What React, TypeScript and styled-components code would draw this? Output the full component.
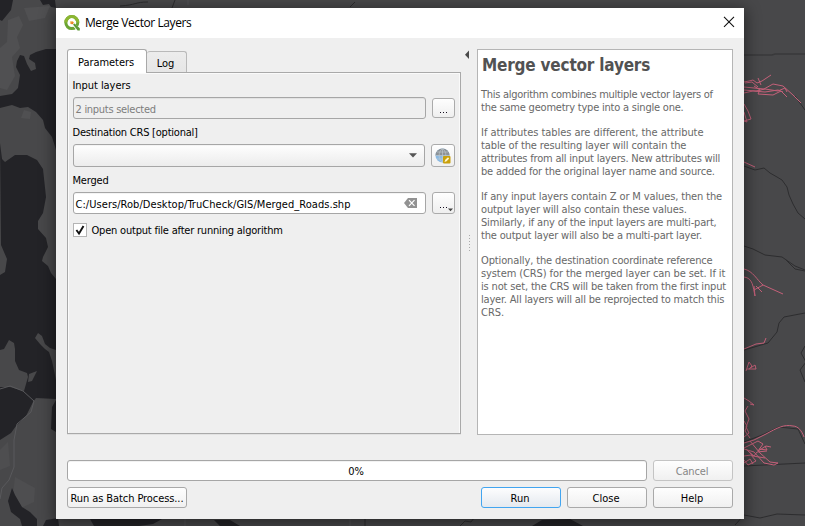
import React from "react";
import styled, { createGlobalStyle, css } from "styled-components";

const GlobalStyle = createGlobalStyle`
  * { box-sizing: border-box; }
  body { margin: 0; background: #fff; }
  #root { display: block; }
`;

const Desktop = styled.main`
  position: relative;
  width: 816px;
  height: 526px;
  overflow: hidden;
  background: #fff;
  padding: 8px 0 0 56px;
  color: #000;
  font: 11px/13px "DejaVu Sans Condensed", "DejaVu Sans", sans-serif;
  white-space: nowrap;
`;

const MapCanvas = styled.svg`
  position: absolute;
  inset: 0 auto auto 0;
`;

const MapShade = styled.div`
  position: absolute;
  inset: 0 11px 0 0;
  overflow: hidden;
  &::after {
    content: "";
    position: absolute;
    left: 56px;
    top: 8px;
    width: 688px;
    height: 511px;
    box-shadow: 0 3px 14px 2px rgba(0, 0, 0, 0.45);
  }
`;

const Dialog = styled.section`
  position: relative;
  display: flex;
  flex-direction: column;
  width: 688px;
  height: 511px;
  background: #efefef;
`;

const TitleBar = styled.header`
  display: flex;
  align-items: center;
  height: 30px;
  padding: 0 9px 0 8px;
  background: #fff;

  > svg:last-child {
    margin-bottom: 2px;
  }
`;

const Text = styled.span<{ $ls?: number }>`
  letter-spacing: ${(p) => p.$ls ?? 0}px;
`;

const Title = styled.h1`
  flex: 1;
  margin: 0 0 0 5px;
  font: 12px/16px "Open Sans", sans-serif;
  letter-spacing: -0.42px;
`;

const Body = styled.div`
  display: grid;
  grid-template-columns: 394px 16px 256px;
  height: 386px;
  margin: 11px 11px 0;
`;

const Left = styled.div`
  display: flex;
  flex-direction: column;
  height: 385px;
`;

const TabBar = styled.div`
  display: flex;
  align-items: flex-end;
  height: 23px;
`;

const Tab = styled.div<{ $active?: boolean }>`
  display: flex;
  align-items: center;
  justify-content: center;
  border: 1px solid #b9b9b9;
  border-bottom: 0;
  border-radius: 3px 3px 0 0;
  ${(p) =>
    p.$active
      ? css`
          position: relative;
          z-index: 1;
          width: 80px;
          height: 24px;
          margin-bottom: -1px;
          background: #fff;
          border-color: #a9a9a9;
          padding: 2px 2px 0 0;
        `
      : css`
          width: 40px;
          height: 21px;
          border-left: 0;
          padding: 3px 2px 0 0;
          background: linear-gradient(#ececec, #e6e6e6);
        `}
`;

const Panel = styled.div`
  flex: 1;
  display: flex;
  flex-direction: column;
  padding: 6px 5px 0;
  border: 1px solid #a9a9a9;
  box-shadow: inset 1px 1px #fafafa, inset -1px 0 #fafafa, 0 1px #e2e2e2;
`;

const Label = styled.label<{ $gap: number; $ls?: number }>`
  height: 13px;
  margin-bottom: ${(p) => p.$gap}px;
  margin-left: -0.5px;
  letter-spacing: ${(p) => p.$ls ?? 0}px;
`;

const Row = styled.div<{ $h: number; $gap: number }>`
  display: flex;
  align-items: center;
  justify-content: space-between;
  height: ${(p) => p.$h}px;
  margin-bottom: ${(p) => p.$gap}px;
`;

const Field = styled.div<{ $disabled?: boolean; $combo?: boolean }>`
  display: flex;
  align-items: center;
  justify-content: space-between;
  width: ${(p) => (p.$combo ? 352 : 353)}px;
  height: 100%;
  padding: 2px 7px 0 1.5px;
  border: 1px solid #a6a6a6;
  border-radius: 3px;
  color: ${(p) => (p.$disabled ? "#7d7d7d" : "#000")};
  background: ${(p) =>
    p.$combo
      ? "linear-gradient(#fefefe, #ececec)"
      : p.$disabled
        ? "#efefef"
        : "#fff"};
  box-shadow: inset 0 1px ${(p) => (p.$disabled ? "#e2e2e2" : "#f4f4f4")};

  > svg {
    margin-bottom: 2px;
  }
`;

const ToolButton = styled.button<{ $w?: number; $h: number }>`
  display: flex;
  align-items: center;
  justify-content: center;
  width: ${(p) => p.$w ?? 23}px;
  height: ${(p) => p.$h}px;
  padding: 0;
  border: 1px solid #ababab;
  border-radius: 3px;
  background: linear-gradient(#fefefe, #efefef);
`;

const CheckRow = styled.div`
  display: flex;
  align-items: center;
  gap: 4.5px;
  height: 15px;

  > span:last-child {
    padding-top: 1px;
  }
`;

const CheckBox = styled.span`
  display: flex;
  width: 14px;
  height: 14px;
  border: 1px solid #b4b4b4;
  background: #fff;
`;

const Splitter = styled.div`
  display: flex;
  justify-content: center;
`;

const HelpPanel = styled.article`
  height: 386px;
  padding: 3px 0 0 3px;
  border: 1px solid #b5b5b5;
  background: #fff;
  color: #686868;
`;

const Heading = styled.h2`
  margin: 0 0 11px 1px;
  font: bold 17px/24px "DejaVu Sans Condensed", "DejaVu Sans", sans-serif;
  letter-spacing: -0.2px;
  color: #525252;
`;

const Paragraph = styled.p`
  display: flex;
  flex-direction: column;
  margin: 0 0 12px;
`;

const Footer = styled.footer`
  display: flex;
  flex-direction: column;
  gap: 6px;
  margin: 25px 11px 0;
`;

const FooterRow = styled.div`
  display: flex;
  gap: 6px;
  height: 21px;
`;

const Progress = styled.div`
  flex: 1;
  display: flex;
  align-items: center;
  justify-content: center;
  border: 1px solid #a6a6a6;
  border-radius: 3px;
  padding: 2px 2px 0 0;
  background: #fff;
  box-shadow: inset 0 1px #f2f2f2;
`;

const PushButton = styled.button<{ $variant?: "default" | "disabled"; $wide?: boolean }>`
  width: ${(p) => (p.$wide ? 120 : 80)}px;
  height: 21px;
  margin-right: ${(p) => (p.$wide ? "auto" : 0)};
  padding: 2px ${(p) => (p.$wide ? 0 : 2)}px 0 0;
  border: 1px solid
    ${(p) => (p.$variant === "default" ? "#42a5f0" : p.$variant === "disabled" ? "#c4c4c4" : "#a9a9a9")};
  border-radius: 3px;
  background: ${(p) =>
    p.$variant === "default" ? "linear-gradient(#fdfdfe, #e4e9ef)" : "linear-gradient(#fefefe, #f0f0f0)"};
  color: ${(p) => (p.$variant === "disabled" ? "#868686" : "#000")};
  font: inherit;
  white-space: nowrap;
`;

type Line = [text: string, letterSpacing: number];

const help: Line[][] = [
  [
    ["This algorithm combines multiple vector layers of", -0.29],
    ["the same geometry type into a single one.", -0.21],
  ],
  [
    ["If attributes tables are different, the attribute", -0.04],
    ["table of the resulting layer will contain the", -0.11],
    ["attributes from all input layers. New attributes will", -0.2],
    ["be added for the original layer name and source.", -0.19],
  ],
  [
    ["If any input layers contain Z or M values, then the", -0.13],
    ["output layer will also contain these values.", -0.15],
    ["Similarly, if any of the input layers are multi-part,", -0.18],
    ["the output layer will also be a multi-part layer.", -0.18],
  ],
  [
    ["Optionally, the destination coordinate reference", -0.13],
    ["system (CRS) for the merged layer can be set. If it", -0.1],
    ["is not set, the CRS will be taken from the first input", -0.16],
    ["layer. All layers will all be reprojected to match this", -0.19],
    ["CRS.", 0],
  ],
];

const MapBackground = () => (
  <MapCanvas width="805" height="526" viewBox="0 0 805 526">
    <rect width="805" height="526" fill="#48484a" />
    <g fill="#505052">
      <path d="M8 20 19 16 23 25 17 37 20 48 12 57 15 76 7 90 0 88V48L7 42Z" />
      <path d="M24 8 50 6 45 18 29 21ZM24 110 31 112 30 119 21 118Z" />
    </g>
    <g fill="#4e4e50">
      <path d="M15 477 35 488 34 502 21 508 13 495ZM0 450 8 442 10 466 0 470Z" />
    </g>
    <g fill="#232327">
      <path d="M0 0H13L11 10 2 21 0 20ZM40 0H55L56 8 51 7 49 4 43 5Z" />
      <path d="M56 49 46 49 36 52 30 55 29 59 35 63 36 69 31 71 27 64 24 56 20 55 17 61 16 67 20 75 18 88 12 94 0 96V108L12 105 20 108 28 107 36 112 43 120 45 128 52 137 56 150Z" />
      <path d="M0 143 2 159 5 162 15 155 27 155 37 160 43 169 46 197 43 213 38 221V229L46 238 48 247 43 257 42 261 48 266 51 273 56 279V350L50 348 45 344 42 336 38 333 35 338 40 344 45 349 49 352 52 361 56 380V399L36 398 33 402 26 416 16 426 11 433 0 440V387L10 387 24 391 28 377 27 373 19 370 15 361 15 349 14 343 9 340 4 349 0 350V275L5 272 7 259 1 245Z" />
      <path d="M52 407 56 400V432L51 429ZM12 488 15 495 22 507 30 512 37 519 37 526 22 526 20 519 11 512 8 501Z" />
      <path d="M46 520 58 518 59 526H43ZM90 519H162L153 524 139 526H94ZM214 520H230L240 526H220ZM542 520 570 519 583 526H532Z" />
    </g>
    <path d="M29 374 37 371 32 381 28 382Z" fill="#48484a" />
    <g fill="none" stroke="#59595c">
      <path d="M0 389 10 386 23 391 34 401 31 412 17 424 14 440 14 467 9 480 2 488 0 499" />
      <path d="M185 519V526M188 0V5M350 518V526" opacity=".7" />
    </g>
    <g fill="none" stroke="#2d2d2f">
      <path d="M120 6C136 5 135 2 148 2M172 8 175 0M365 519V526M460 526 465 521 471 522 474 518M350 7 355 2" />
      <path d="M744 55H772L775 54H805" stroke="#39393b" strokeWidth="1.6" />
      <path d="M744 166 755 170 764 168 770 173 777 177 782 180 787 187 789 195 793 204 798 213 805 219M795 96 805 110M744 246 753 249 765 255 782 257 795 266 805 270" />
      <path d="M786 260 795 269 805 271M744 350 768 343 777 332 779 323 784 317 805 313M805 346 801 353 806 362 800 370 805 382M744 442 762 435 779 427 798 429 805 444M744 466 805 463M735 525 744 515 760 518 777 514 805 515" />
    </g>
    <g fill="none" stroke="#c46079" strokeWidth="1" strokeLinejoin="round">
      <path d="M744 82 749 81 753 80 757 83 762 81 768 77 771 75M745 83 752 82 758 87M744 87 754 88 764 89 773 84 783 86 793 95 801 103M744 90 756 91 765 89 778 91 785 88 787 92M744 93 753 91 765 92 778 90 783 92M754 86 760 90 758 94 773 95 781 91 787 97M758 78 761 85" />
      <path d="M744 104 748 111 751 119 744 121 747 122 744 112M744 162 755 167" />
      <path d="M744 269C753 271 757 280 763 285L783 294M744 277C753 278 753 287 755 296L754 286M763 285 754 290M756 286 762 292M744 349 756 344 764 343 766 338" />
      <path d="M746 371 749 362 752 366 749 369 755 365 756 369 747 369M744 398 749 401 754 405 750 404M748 406 745 411 749 419 746 427 749 433 744 437" />
      <path d="M744 443 754 440 766 434C777 428 784 424 793 426C798 426 802 431 804 437M744 448 758 441 763 444 758 451 766 446 771 447M750 441 760 453 770 462 778 463 774 465 764 463 754 452 744 449M744 456 751 455 756 461 748 465 744 460M747 450 753 456 765 458M744 463 750 459 753 464M759 449 767 450 765 446" />
      <path d="M744 421 747 426 745 431 750 438M746 449 754 456 757 452 767 451" />
    </g>
  </MapCanvas>
);

const Logo = () => (
  <svg width="16" height="16" viewBox="0 0 16 16">
    <circle cx="7.8" cy="7.6" r="6" fill="none" stroke="#6ba433" strokeWidth="3" />
    <path d="M1.8 7.6A6 6 0 0 1 13.8 7.6" fill="none" stroke="#8cb632" strokeWidth="3" />
    <path d="M8 10 10 8 16 13.6V15.8H13.2Z" fill="#fff" />
    <path d="M9 9.6 10.6 8.4 15.8 13.2V15.6H13.6Z" fill="#5f9836" />
    <path d="M6.2 6.2H8.8L10.2 7.8 8.4 9.6 6.2 8.8Z" fill="#f1b54a" />
    <path d="M7.3 7.2H9V8.9H7.3Z" fill="#e77626" />
  </svg>
);

const Globe = () => (
  <svg width="16" height="16" viewBox="0 0 16 16">
    <circle cx="7.5" cy="7.5" r="7" fill="#8bb9e2" />
    <path d="M.5 7.5A7 7 0 0 1 14.5 7.5Z" fill="#8c9297" />
    <path d="M.5 7.5H14.5M2 4H13M2 11H13M7.5.5V14.5M7.5.5C3 4 3 11 7.5 14.5M7.5.5C12 4 12 11 7.5 14.5" fill="none" stroke="#c3ccd2" strokeWidth=".6" />
    <rect x="8" y="8" width="7.5" height="7.5" rx="1" fill="#c9a00c" />
    <path d="M9.5 14 10.3 11.8 13 9.3 14.2 10.5 11.6 13.2Z" fill="#fff7ce" />
  </svg>
);

const Dots = ({ menu }: { menu?: boolean }) => (
  <svg width="21" height="18" viewBox="0 0 21 18">
    <path d="M7 13.5H8M10 13.5H11M13 13.5H14" stroke="#161022" />
    {menu && <path d="M15 14.5H20L17.5 17.2Z" fill="#444" />}
  </svg>
);

export default function App() {
  return (
    <Desktop>
      <GlobalStyle />
      <MapBackground />
      <MapShade />
      <Dialog>
        <TitleBar>
          <Logo />
          <Title>Merge Vector Layers</Title>
          <svg width="12" height="12" viewBox="0 0 12 12">
            <path d="M1 .8 11 10.8M11 .8 1 10.8" stroke="#111" strokeWidth="1.1" />
          </svg>
        </TitleBar>
        <Body>
          <Left>
            <TabBar>
              <Tab $active><Text $ls={-0.05}>Parameters</Text></Tab>
              <Tab><Text>Log</Text></Tab>
            </TabBar>
            <Panel>
              <Label $gap={5} $ls={-0.06}>Input layers</Label>
              <Row $h={22} $gap={7}>
                <Field $disabled><Text $ls={-0.28}>2 inputs selected</Text></Field>
                <ToolButton $h={20}><Dots /></ToolButton>
              </Row>
              <Label $gap={5} $ls={-0.22}>Destination CRS [optional]</Label>
              <Row $h={23} $gap={7}>
                <Field $combo>
                  <span />
                  <svg width="8" height="5" viewBox="0 0 8 5"><path d="M0 .2H8L4 4.6Z" fill="#555" /></svg>
                </Field>
                <ToolButton $w={24} $h={23}><Globe /></ToolButton>
              </Row>
              <Label $gap={5} $ls={-0.2}>Merged</Label>
              <Row $h={22} $gap={8}>
                <Field>
                  <Text $ls={0.05}>C:/Users/Rob/Desktop/TruCheck/GIS/Merged_Roads.shp</Text>
                  <svg width="14" height="10" viewBox="0 0 14 10">
                    <path d="M4 0H13V10H4L0 5Z" fill="#929292" />
                    <path d="M5 2.2 10.5 7.8M10.5 2.2 5 7.8" stroke="#fff" strokeWidth="1.2" />
                  </svg>
                </Field>
                <ToolButton $h={22}><Dots menu /></ToolButton>
              </Row>
              <CheckRow>
                <CheckBox>
                  <svg width="12" height="12" viewBox="0 0 12 12"><path d="M2.4 6 5 9.5 9.5 2" fill="none" stroke="#111" strokeWidth="1.9" /></svg>
                </CheckBox>
                <Text $ls={-0.2}>Open output file after running algorithm</Text>
              </CheckRow>
            </Panel>
          </Left>
          <Splitter>
            <svg width="16" height="386" viewBox="0 0 16 386">
              <path d="M8 1.5V10L4 5.7Z" fill="#4b4b4b" />
              <path d="M8.5 186V202" stroke="#aaa" strokeDasharray="1 2" />
            </svg>
          </Splitter>
          <HelpPanel>
            <Heading>Merge vector layers</Heading>
            {help.map((lines, i) => (
              <Paragraph key={i}>
                {lines.map(([text, ls]) => <Text key={text} $ls={ls}>{text}</Text>)}
              </Paragraph>
            ))}
          </HelpPanel>
        </Body>
        <Footer>
          <FooterRow>
            <Progress><Text>0%</Text></Progress>
            <PushButton $variant="disabled"><Text $ls={-0.15}>Cancel</Text></PushButton>
          </FooterRow>
          <FooterRow>
            <PushButton $wide><Text $ls={-0.09}>Run as Batch Process...</Text></PushButton>
            <PushButton $variant="default"><Text>Run</Text></PushButton>
            <PushButton><Text>Close</Text></PushButton>
            <PushButton><Text>Help</Text></PushButton>
          </FooterRow>
        </Footer>
      </Dialog>
    </Desktop>
  );
}
